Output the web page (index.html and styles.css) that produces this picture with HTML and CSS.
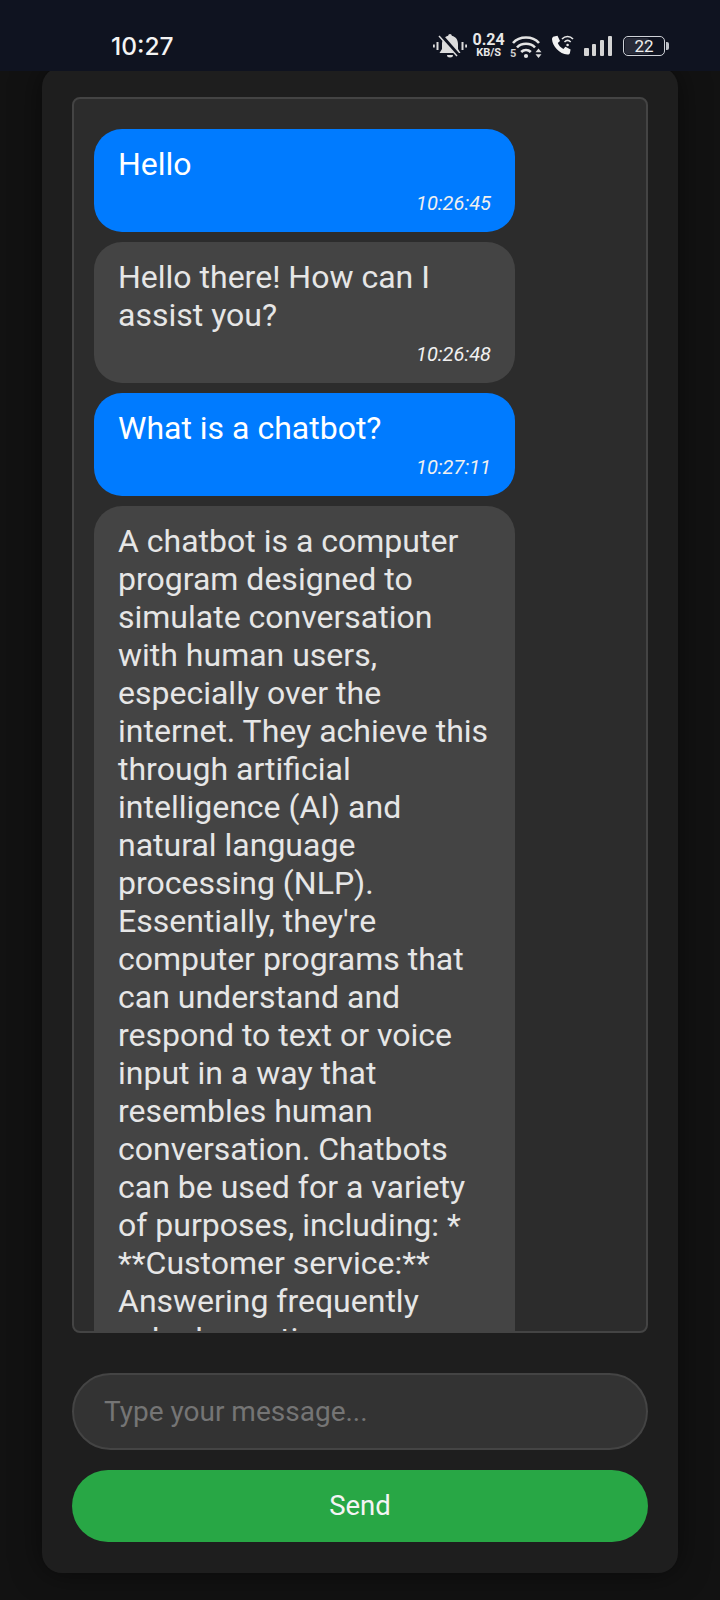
FILE: index.html
```html
<!DOCTYPE html>
<html lang="en">
<head>
<meta charset="utf-8">
<title>Chatbot</title>
<link rel="stylesheet" href="styles.css">
</head>
<body>
<header class="status">
  <span class="clock">10:27</span>
  <div class="status-icons">
    <svg class="ic-bell" width="34" height="26" viewBox="0 0 34 26">
      <path d="M17 1c-1 0-1.700.8-1.800 1.700C10.800 3.800 9 7 9 11v5l-2.500 4h21L25 16v-5c0-4-1.800-7.200-6.200-8.300C18.700 1.800 18 1 17 1z" fill="#dcdcdc"/>
      <path d="M14 22h6a3 2.500 0 0 1-6 0z" fill="#dcdcdc"/>
      <path d="M7 1l20 23" stroke="#0f1320" stroke-width="3.500"/>
      <path d="M6 3l18 20" stroke="#dcdcdc" stroke-width="1.500"/>
      <path d="M.8 11.500v3M4.500 9v8M29.500 9v8M33.200 11.500v3" stroke="#dcdcdc" stroke-width="2"/>
    </svg>
    <div class="speed"><span class="speed-num">0.24</span><span class="speed-unit">KB/S</span></div>
    <svg class="ic-wifi" width="32" height="26" viewBox="0 0 32 26">
      <g fill="none" stroke="#e4e4e4" stroke-width="2.600">
        <path d="M3 10C9.500 2.600 22.500 2.600 29 10"/>
        <path d="M7 14.500C11.500 9.500 20.500 9.500 25 14.500"/>
        <path d="M11.200 19c2.700-2.700 6.900-2.700 9.600 0"/>
      </g>
      <circle cx="16" cy="23" r="2.100" fill="#e4e4e4"/>
      <text x="0" y="24" class="wifi-five">5</text>
      <path d="M25.500 19.300h6l-3-3.800zM25.500 21.300h6l-3 3.700z" fill="#dcdcdc"/>
    </svg>
    <svg class="ic-call" width="23" height="21" viewBox="0 0 23 21">
      <path d="M3 1.500 6.500.8 9 6 6.800 8c1 2.500 3 4.700 5.600 6l2-2.200 5.200 2.600-.7 3.500c-.3 1.200-1.300 1.700-2.500 1.600C8.500 18.800 1.500 11.500 1 4.200 1 2.900 1.800 1.800 3 1.500z" fill="#f2f2f2"/>
      <g fill="none" stroke="#e8e8e8" stroke-width="1.600">
        <path d="M11 4c3.200-3.400 8-3.400 11 0"/>
        <path d="M13.500 7c1.800-1.800 4.400-1.800 6.200 0"/>
      </g>
      <circle cx="16.600" cy="10" r="1.300" fill="#e8e8e8"/>
    </svg>
    <div class="bars"><i class="bar bar-1"></i><i class="bar bar-2"></i><i class="bar bar-3"></i><i class="bar bar-4"></i></div>
    <div class="battery"><div class="battery-body"><span class="battery-fill"></span><span class="battery-num">22</span></div><span class="battery-tip"></span></div>
  </div>
</header>
<main class="card">
  <section class="chat">
    <div class="bubble bubble-user"><p class="msg">Hello</p><time class="stamp">10:26:45</time></div>
    <div class="bubble bubble-bot"><p class="msg">Hello there! How can I assist you?</p><time class="stamp">10:26:48</time></div>
    <div class="bubble bubble-user"><p class="msg">What is a chatbot?</p><time class="stamp">10:27:11</time></div>
    <div class="bubble bubble-bot"><p class="msg">A chatbot is a computer program designed to simulate conversation with human users, especially over the internet. They achieve this through artificial intelligence (AI) and natural language processing (NLP). Essentially, they're computer programs that can understand and respond to text or voice input in a way that resembles human conversation. Chatbots can be used for a variety of purposes, including: * **Customer service:** Answering frequently asked questions</p></div>
  </section>
  <input class="field" type="text" placeholder="Type your message...">
  <button class="send" type="button">Send</button>
</main>
</body>
</html>
```
FILE: styles.css
```css
* { box-sizing: border-box; }
html, body { margin: 0; padding: 0; }
body {
  width: 720px;
  height: 1600px;
  overflow: hidden;
  background: #121212;
  font-family: Roboto, "Noto Sans", sans-serif;
  color: #f0f0f0;
}
.status {
  position: relative;
  z-index: 2;
  height: 71px;
  background: #0f1320;
  display: flex;
  align-items: center;
  justify-content: space-between;
  padding: 0 51px 0 111px;
}
.clock { font-family: Inter, Roboto, sans-serif; font-size: 24.500px; font-weight: 500; color: #f4f4f4; margin-top: 20px; }
.status-icons { display: flex; align-items: center; gap: 5px; margin-top: 20px; color: #e8e8e8; }
.speed { display: flex; flex-direction: column; align-items: center; font-weight: 700; width: 34px; margin-right: -1px; }
.speed-num { font-size: 16px; line-height: 14px; }
.speed-unit { font-size: 11px; line-height: 11px; }
.wifi-five { font-family: Roboto, sans-serif; font-size: 11px; font-weight: 700; fill: #cfcfcf; }
.ic-call { margin-left: 4px; margin-right: 5.500px; }
.bars { display: flex; align-items: flex-end; gap: 3.300px; height: 21px; }
.bar { display: block; width: 4.500px; background: #d4d4d4; border-radius: 1px; }
.bar-1 { height: 8px; }
.bar-2 { height: 12px; }
.bar-3 { height: 16px; }
.bar-4 { height: 20px; }
.battery { display: flex; align-items: center; margin-left: 6px; }
.battery-body {
  position: relative;
  width: 42px;
  height: 20px;
  border: 1.500px solid #cfd2d8;
  border-radius: 5px;
  display: flex;
  align-items: center;
  justify-content: center;
}
.battery-fill { position: absolute; left: 1px; top: 1px; bottom: 1px; width: 24px; background: #282b38; border-radius: 2px; }
.battery-num { position: relative; font-size: 17px; color: #eeeeee; }
.battery-tip { width: 3px; height: 8px; margin-left: 1px; background: #bfc2c8; border-radius: 0 2px 2px 0; }
.card {
  width: 636px;
  height: 1506px;
  margin: -4px 0 0 42px;
  padding: 30px 30px 0;
  background: #1e1e1e;
  border-radius: 20px;
  box-shadow: 0 0 30px rgba(0, 0, 0, .5);
  display: flex;
  flex-direction: column;
}
.chat {
  height: 1236px;
  flex: none;
  overflow: hidden;
  padding: 30px 20px 0;
  background: #2c2c2c;
  border: 2px solid #444444;
  border-radius: 8px;
  display: flex;
  flex-direction: column;
  gap: 10px;
}
.bubble {
  flex: none;
  width: 421px;
  padding: 15.500px 24px 17.500px;
  border-radius: 28px;
  color: #ffffff;
}
.bubble-user { background: #007bff; }
.bubble-bot { background: #444444; color: #e6e6e6; }
.msg { margin: 0; font-size: 32px; line-height: 38px; }
.stamp {
  display: block;
  margin-top: 8px;
  text-align: right;
  font-size: 20px;
  line-height: 24px;
  font-style: italic;
  color: #f0f0f0;
}
.field {
  flex: none;
  height: 77px;
  margin-top: 40px;
  padding: 0 30px;
  background: #333333;
  border: 2px solid #444444;
  border-radius: 39px;
  font: 28px Roboto, sans-serif;
  color: #f0f0f0;
  outline: none;
}
.field::placeholder { color: #757575; opacity: 1; }
.send {
  flex: none;
  height: 72px;
  margin-top: 20px;
  padding-bottom: 2px;
  background: #28a745;
  border: 0;
  border-radius: 37px;
  font: 400 27.500px Roboto, sans-serif;
  color: #f4f4f4;
}
```
